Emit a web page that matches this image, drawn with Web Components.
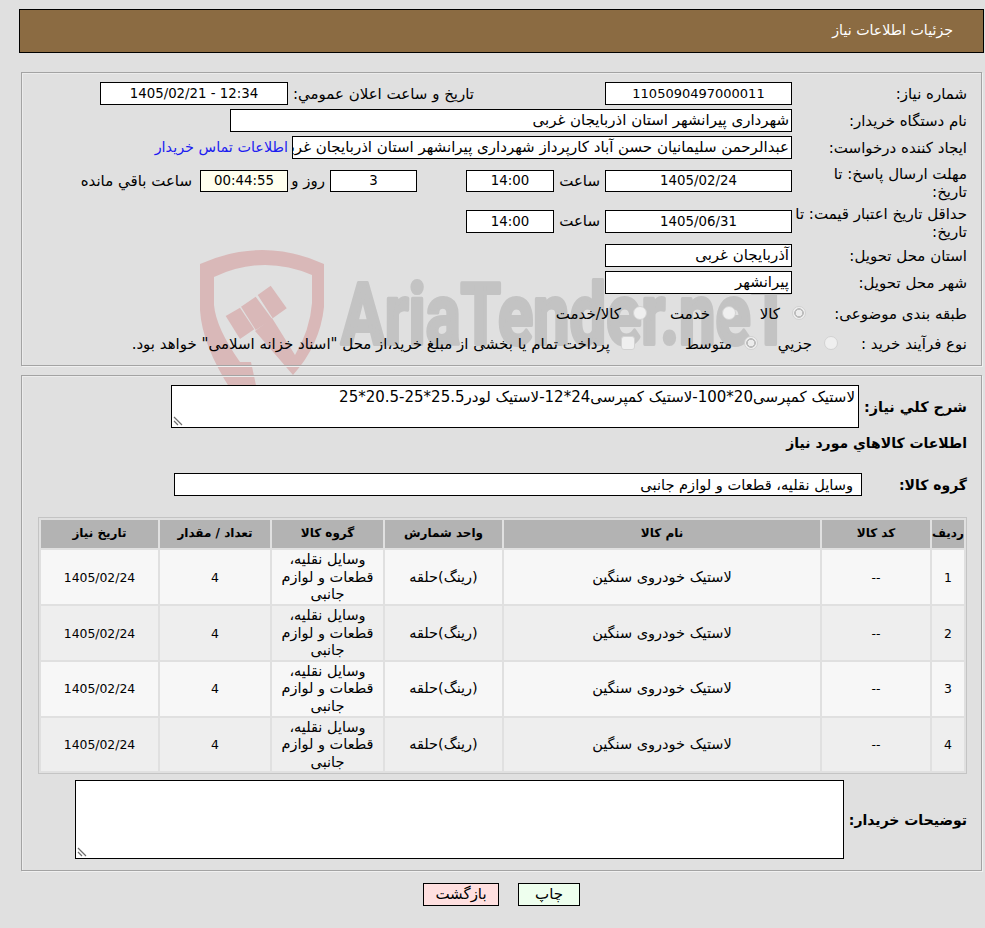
<!DOCTYPE html>
<html lang="fa" dir="rtl">
<head>
<meta charset="utf-8">
<title>جزئیات اطلاعات نیاز</title>
<style>
html,body{margin:0;padding:0;background:#e0e0e0}
body{font:15px/1.2 "DejaVu Sans",sans-serif;color:#000;height:928px;overflow:hidden}
</style>
</head>
<body>
<x-app>
  <x-titlebar>جزئیات اطلاعات نیاز</x-titlebar>

  <x-panel style="--top:19px;--pt:9px;--h:294px">
    <x-row label="شماره نیاز:" style="--rh:23px">
      <x-box center style="--w:187px;--fs:13px" dir="ltr">1105090497000011</x-box>
      <x-t style="--ms:131px;--tw:181px">تاريخ و ساعت اعلان عمومي:</x-t>
      <x-box center style="--w:188px;--ms:5px" dir="ltr">1405/02/21 - 12:34</x-box>
    </x-row>
    <x-row label="نام دستگاه خریدار:" style="--rh:23px;--mt:4px">
      <x-box style="--w:562px">شهرداری پیرانشهر استان اذربایجان غربی</x-box>
    </x-row>
    <x-row label="ایجاد کننده درخواست:" style="--rh:23px;--mt:4px">
      <x-box style="--w:500px">عبدالرحمن سلیمانیان حسن آباد کارپرداز شهرداری پیرانشهر استان اذربایجان غربی</x-box>
      <x-t link style="--ms:4px">اطلاعات تماس خریدار</x-t>
    </x-row>
    <x-row label="مهلت ارسال پاسخ: تا&lt;br&gt;تاریخ:" style="--rh:36px;--mt:4px;--lpt:2px">
      <x-box center style="--w:187px;--bh:22px" dir="ltr">1405/02/24</x-box>
      <x-t style="--ms:5px;--tw:46px">ساعت</x-t>
      <x-box center style="--w:88px;--bh:22px" dir="ltr">14:00</x-box>
      <x-box center style="--w:87px;--bh:22px;--ms:49px" dir="ltr">3</x-box>
      <x-t style="--ms:5px;--tw:37px">روز و</x-t>
      <x-box center soft style="--w:88px;--bh:22px" dir="ltr">00:44:55</x-box>
      <x-t style="--ms:8px">ساعت باقي مانده</x-t>
    </x-row>
    <x-row label="حداقل تاریخ اعتبار قیمت: تا&lt;br&gt;تاریخ:" style="--rh:36px;--mt:4px;--lpt:2px">
      <x-box center style="--w:187px" dir="ltr">1405/06/31</x-box>
      <x-t style="--ms:5px;--tw:46px">ساعت</x-t>
      <x-box center style="--w:88px" dir="ltr">14:00</x-box>
    </x-row>
    <x-row label="استان محل تحویل:" style="--rh:23px;--mt:5px">
      <x-box style="--w:187px">آذربایجان غربی</x-box>
    </x-row>
    <x-row label="شهر محل تحویل:" style="--rh:23px;--mt:4px">
      <x-box style="--w:187px">پیرانشهر</x-box>
    </x-row>
    <x-row label="طبقه بندی موضوعی:" style="--rh:23px;--mt:8px;--cs:-14px">
      <x-opt checked style="--ow:70px">کالا</x-opt>
      <x-opt style="--ow:89px">خدمت</x-opt>
      <x-opt>کالا/خدمت</x-opt>
    </x-row>
    <x-row label="نوع فرآیند خرید :" style="--rh:23px;--mt:7px;--cs:-46px">
      <x-opt style="--ow:80px">جزيي</x-opt>
      <x-opt checked style="--ow:123px">متوسط</x-opt>
      <x-opt square style="--og:11px">پرداخت تمام یا بخشی از مبلغ خرید،از محل "اسناد خزانه اسلامی" خواهد بود.</x-opt>
    </x-row>
  </x-panel>

  <x-panel style="--top:9px;--pt:9px;--h:496px">
    <x-row bold label="شرح کلي نياز:" style="--rh:43px;--lw:108px;--lfs:14.4px">
      <x-area style="--w:688px;--ah:43px">لاستیک کمپرسی20*100-لاستیک کمپرسی24*12-لاستیک لودر25.5*25-20.5*25</x-area>
    </x-row>
    <x-row bold label="اطلاعات کالاهاي مورد نياز" style="--rh:20px;--mt:5px;--lw:400px"></x-row>
    <x-row bold label="گروه کالا:" style="--rh:23px;--mt:20px;--lw:105px">
      <x-box style="--w:688px;--pr:8px;--fs:14.6px">وسایل نقلیه، قطعات و لوازم جانبی</x-box>
    </x-row>
    <x-goods-table></x-goods-table>
    <x-row bold label="توضیحات خریدار:" style="--rh:79px;--mt:6px;--lw:123px">
      <x-area style="--w:769px;--ah:79px"></x-area>
    </x-row>
  </x-panel>

  <x-actions>
    <x-btn tone="green" style="--w:62px">چاپ</x-btn>
    <x-btn tone="red" style="--w:76px">بازگشت</x-btn>
  </x-actions>
</x-app>

<script>
const def=(name,css,html)=>{
  customElements.define(name,class extends HTMLElement{
    constructor(){super();this.attachShadow({mode:'open'}).innerHTML=`<style>${css}</style>${typeof html==='function'?html(this):html}`;}
  });
};

def('x-app',`
  :host{display:block;position:relative;width:985px;height:928px;background:#e0e0e0;overflow:hidden}
  .mark{position:absolute;left:0;top:0;z-index:0}
  .content{position:relative;z-index:1;padding:9px 1px 0 19px;box-sizing:border-box;height:100%}
`,`
  <svg class="mark" width="985" height="928" viewBox="0 0 985 928" aria-hidden="true">
    <g fill="#d9b8b8">
      <path d="M200 264Q263 236 324 264L324 307Q320 345 293 375L255 331L272 318L295 355Q310 330 312 303L312 275Q263 254 214 277L214 305Q216 328 240 362L251 362L257 390L231 390Q202 345 200 310Z"/>
      <path d="M225.7 316L240 307.7L254.3 329.3L240 339Z"/>
      <path d="M241 306.7L255.7 296.7L272.3 319.3L255.7 330Z"/>
      <path d="M257.7 295L270.7 285.7L286.7 308.3L272.7 318.3Z"/>
    </g>
    <text x="341" y="344" textLength="450" lengthAdjust="spacingAndGlyphs" direction="ltr" font-family="Roboto,'Liberation Sans',sans-serif" font-weight="700" font-size="86" fill="#c3c3c3" stroke="#c3c3c3" stroke-width="4" stroke-linejoin="round">AriaTender.neT</text>
  </svg>
  <div class="content"><slot></slot></div>
`);

def('x-titlebar',`
  :host{display:flex;align-items:center;box-sizing:border-box;height:44px;border:1px solid #000;background:#8b6b42;color:#fff;padding-inline-start:30px;font-size:14.2px}
`,`<slot></slot>`);

def('x-panel',`
  :host{display:block;box-sizing:border-box;margin:var(--top,0) 2px 0 2px;height:var(--h);padding:var(--pt,0) 14px 0 14px;
    border:1px solid #a3a3a3;box-shadow:1px 1px 0 #f0f0f0, inset 1px 1px 0 #ececec}
`,`<slot></slot>`);

def('x-row',`
  :host{display:flex;align-items:center;min-height:var(--rh,23px);margin-top:var(--mt,0)}
  .l{flex:none;width:var(--lw,175px);line-height:18px;box-sizing:border-box;margin-top:var(--lpt,0);margin-bottom:calc(var(--lpt,0px) * -1)}
  :host([bold]) .l{font-weight:bold;font-size:var(--lfs,14px);white-space:nowrap}
  .c{flex:1;display:flex;align-items:center;min-width:0;margin-right:var(--cs,0)}
`,el=>`<div class="l">${el.getAttribute('label')||''}</div><div class="c"><slot></slot></div>`);

def('x-box',`
  :host{display:block;flex:none;box-sizing:border-box;width:var(--w);height:var(--bh,23px);line-height:calc(var(--bh,23px) - 2px);margin-right:var(--ms,0);
    border:1px solid #000;background:#fff;padding:0 var(--pr,2px);white-space:nowrap;overflow:hidden;text-align:start;font-size:var(--fs,15px)}
  :host([center]){text-align:center;font-size:var(--fs,13.33px)}
  :host([soft]){background:#ffffee}
`,`<slot></slot>`);

def('x-t',`
  :host{display:block;flex:none;white-space:nowrap;margin-right:var(--ms,0);width:var(--tw,auto)}
  :host([link]){color:#1c1cf0;font-size:14.4px;padding-top:1px}
`,`<slot></slot>`);

def('x-opt',`
  :host{display:flex;flex:none;align-items:center;width:var(--ow,auto);white-space:nowrap}
  i{flex:none;box-sizing:border-box;width:14px;height:14px;border-radius:50%;margin-left:var(--og,12px);
    background:#efefef;border:1px solid #d2d2d2;position:relative;top:-1px}
  :host([checked]) i{background:radial-gradient(circle,#ececec 0 3px,#bdbdbd 3.4px 4.6px,#efefef 5px)}
  :host([square]) i{border-radius:3px}
`,`<i></i><span><slot></slot></span>`);

def('x-area',`
  :host{display:block;position:relative;flex:none;box-sizing:border-box;width:var(--w);height:var(--ah);border:1px solid #000;background:#fff;padding:3px 3px;line-height:16px}
  svg{position:absolute;left:1px;bottom:1px}
`,`<slot></slot><svg width="10" height="10" viewBox="0 0 10 10" aria-hidden="true"><path d="M1 1L9 9M1 5L5 9" stroke="#6e6e6e" stroke-width="1.2" fill="none"/></svg>`);

const rows=[1,2,3,4];
def('x-goods-table',`
  :host{display:block;margin:21px 0 0 0;margin-inline-end:2px}
  table{border-collapse:separate;border-spacing:2px;table-layout:fixed;width:928px;border:1px solid #c4c4c4;background:#e0e0e0;text-align:center;line-height:17.5px;font-size:14.5px}
  th{background:#b3b3b3;height:28px;padding:0;font-size:12px;white-space:nowrap}
  td{padding:1px 0 0;box-sizing:border-box}
  tbody tr:nth-child(odd) td{background:#f7f7f7;height:54px}
  tbody tr:nth-child(even) td{background:#eeeeee;height:53px}
  .n{font-size:12.4px}
`,`
<table>
  <colgroup><col style="width:32px"><col style="width:108px"><col style="width:316px"><col style="width:117px"><col style="width:111px"><col style="width:110px"><col style="width:117px"></colgroup>
  <thead><tr><th>ردیف</th><th>کد کالا</th><th>نام کالا</th><th>واحد شمارش</th><th>گروه کالا</th><th>تعداد / مقدار</th><th>تاریخ نیاز</th></tr></thead>
  <tbody>${rows.map(n=>`<tr><td class="n">${n}</td><td class="n">--</td><td>لاستیک خودروی سنگین</td><td>(رینگ)حلقه</td><td>وسایل نقلیه،<br>قطعات و لوازم<br>جانبی</td><td class="n">4</td><td class="n" dir="ltr">1405/02/24</td></tr>`).join('')}</tbody>
</table>`);

def('x-actions',`
  :host{display:flex;justify-content:center;gap:19px;margin-top:12px}
`,`<slot></slot>`);

def('x-btn',`
  :host{display:block;box-sizing:border-box;width:var(--w);height:23px;line-height:21px;border:1px solid #000;text-align:center;cursor:pointer}
  :host([tone=green]){background:#eeffee}
  :host([tone=red]){background:#ffe0e0}
`,`<slot></slot>`);
</script>
</body>
</html>
